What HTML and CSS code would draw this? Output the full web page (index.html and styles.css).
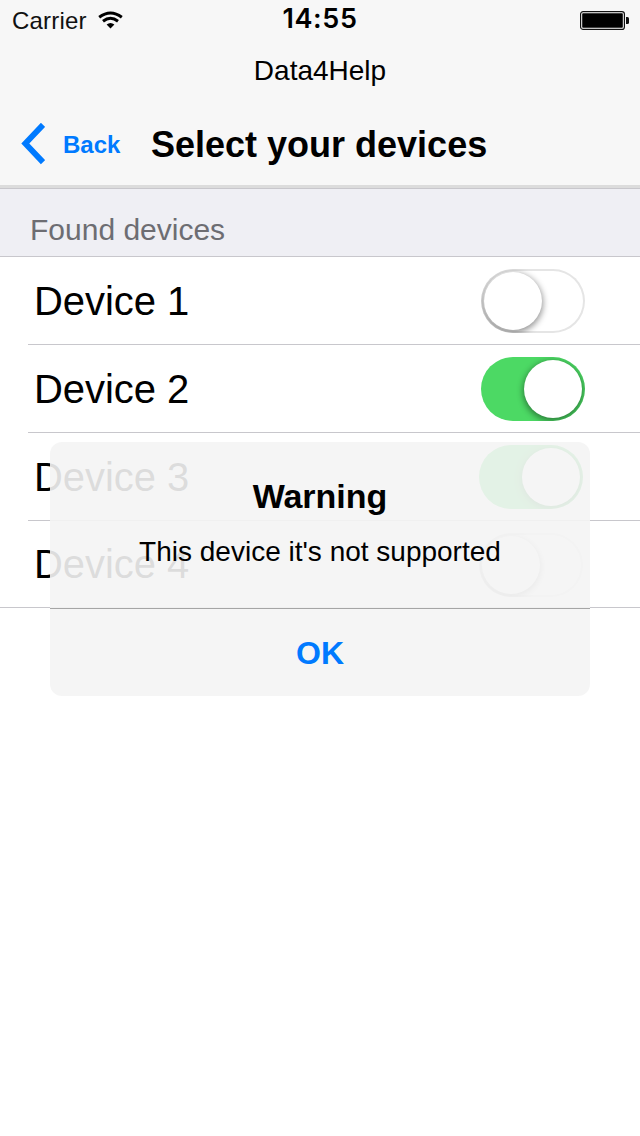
FILE: index.html
```html
<!DOCTYPE html>
<html lang="en">
<head>
<meta charset="utf-8">
<title>Data4Help</title>
<link rel="stylesheet" href="styles.css">
</head>
<body>
<div class="screen">
  <header class="header">
    <div class="status">
      <div class="status-left">
        <span class="carrier">Carrier</span>
        <svg class="wifi" width="26" height="20" viewBox="0 0 26 20" fill="none" stroke="#000">
          <path d="M1.200 6.200 Q12.500 -2.200 23.800 6.200" stroke-width="3"/>
          <path d="M5 10.200 Q12.500 4.400 20 10.200" stroke-width="3"/>
          <path d="M8.600 13.400 Q12.500 10.400 16.400 13.400 L12.500 17.600 Z" fill="#000" stroke="none"/>
        </svg>
      </div>
      <span class="clock">14:55</span>
      <div class="status-right">
        <svg class="battery" width="50" height="20" viewBox="0 0 50 20">
          <rect x=".6" y=".6" width="43.800" height="17.800" rx="2.500" fill="#fff" stroke="#111" stroke-width="1.200"/>
          <rect x="2.200" y="2.200" width="40.600" height="14.600" rx=".8" fill="#000"/>
          <path d="M46 6 h1.500 q1.500 0 1.500 1.500 v4 q0 1.500 -1.500 1.500 h-1.500 z" fill="#111"/>
        </svg>
      </div>
    </div>
    <div class="app-name">Data4Help</div>
    <nav class="nav">
      <svg class="chevron" width="24" height="42" viewBox="0 0 24 42" fill="none" stroke="#007aff" stroke-width="5.800">
        <path d="M22 1.800 L4.300 20.500 L22 39.200"/>
      </svg>
      <span class="back">Back</span>
      <h1 class="title">Select your devices</h1>
    </nav>
  </header>
  <main>
    <h2 class="section">Found devices</h2>
    <ul class="list">
      <li class="row"><span class="name">Device 1</span><span class="switch"><i class="knob"></i></span></li>
      <li class="row"><span class="name">Device 2</span><span class="switch on"><i class="knob"></i></span></li>
      <li class="row covered"><span class="name">Device 3</span><span class="switch on"><i class="knob"></i></span></li>
      <li class="row covered last"><span class="name">Device 4</span><span class="switch"><i class="knob"></i></span></li>
    </ul>
  </main>
  <div class="alert">
    <div class="alert-body">
      <h3 class="alert-title">Warning</h3>
      <p class="alert-text">This device it's not supported</p>
    </div>
    <div class="alert-ok">OK</div>
  </div>
</div>
</body>
</html>
```

FILE: styles.css
```css
* { box-sizing: border-box; margin: 0; padding: 0; }
body {
  font-family: "Liberation Sans", Arial, sans-serif;
  color: #000;
  background: #fff;
}
.screen { position: relative; width: 640px; height: 1136px; overflow: hidden; background: #fff; }
h1, h2, h3 { font-weight: normal; }

.header { height: 189px; background: #f7f7f7; border-bottom: 1px solid #c8c7cc; box-shadow: inset 0 -3px #dcdcdc; }
.status { display: grid; grid-template-columns: 1fr auto 1fr; height: 40px; line-height: 40px; }
.status-left { display: flex; padding: 1px 0 0 12px; gap: 11px; }
.carrier { font-size: 24px; letter-spacing: .2px; color: #111; }
.wifi { margin-top: 10px; }
.clock { font-family: Inter, "Liberation Sans", sans-serif; font-weight: 600; font-size: 27px; line-height: 37px; letter-spacing: .6px; }
.status-right { display: flex; justify-content: flex-end; padding: 11px 10px 0 0; }
.app-name { height: 62px; line-height: 61px; font-size: 28px; text-align: center; }
.nav { display: flex; height: 84px; padding-left: 21px; }
.chevron { margin-top: 21px; }
.back { margin-left: 18px; width: 88px; font-size: 24px; font-weight: bold; line-height: 86px; color: #007aff; }
.title { font-size: 36px; font-weight: bold; line-height: 86px; white-space: nowrap; }

.section { height: 68px; padding-left: 30px; padding-top: 7px; font-size: 30px; line-height: 67px; color: #6d6d72; background: #efeff4; border-bottom: 1px solid #c8c7cc; }
.list { list-style: none; }
.row {
  display: flex;
  align-items: center;
  justify-content: space-between;
  height: 88px;
  padding: 0 55px 0 34px;
  background: linear-gradient(#c8c7cc, #c8c7cc) 28px 87px / 612px 1px no-repeat;
}
.row.covered { padding-right: 57px; }
.row.last { height: 87px; background-position: 0 86px; background-size: 640px 1px; }
.name { font-size: 40px; line-height: 86px; letter-spacing: -.05px; padding-bottom: 1px; }
.switch { display: flex; width: 104px; height: 64px; padding: 3px; border-radius: 32px; box-shadow: inset 0 0 0 2px #e5e5e5; overflow: hidden; }
.switch.on { justify-content: flex-end; background: #4cd964; box-shadow: none; }
.knob { width: 58px; height: 58px; border-radius: 50%; background: #fff; box-shadow: 0 2px 6px 1px rgba(0, 0, 0, .42); }

.alert {
  position: absolute;
  left: 50px;
  top: 442px;
  width: 540px;
  height: 254px;
  border-radius: 12px;
  text-align: center;
  background: rgba(244, 244, 244, .9);
}
.alert-body { height: 167px; padding-top: 34px; border-bottom: 1px solid #a5a5a5; }
.alert-title { font-size: 34px; font-weight: bold; line-height: 40px; }
.alert-text { padding-top: 16px; font-size: 28px; line-height: 40px; }
.alert-ok { height: 87px; font-size: 32px; font-weight: bold; line-height: 88px; color: #007aff; }
```
